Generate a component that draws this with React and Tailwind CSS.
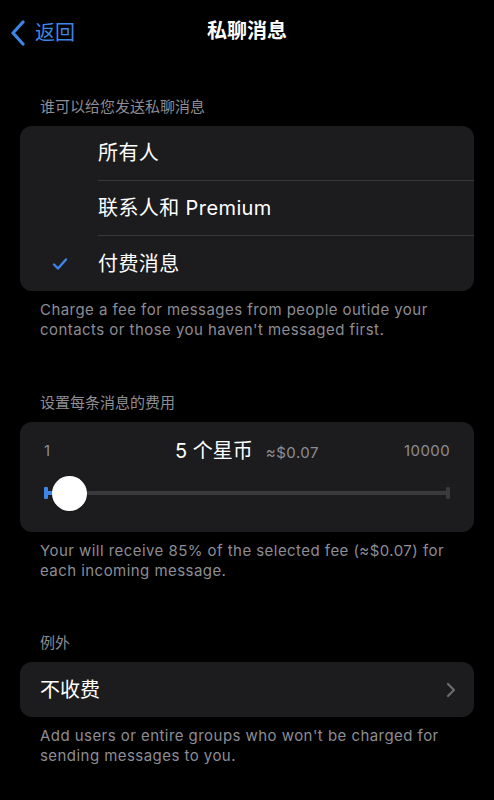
import React from 'react'

const font = { fontFamily: '"Inter", "Noto Sans CJK SC", sans-serif' }

const Check = () => (
  <svg width="16" height="14" viewBox="0 0 16 14" fill="none">
    <path d="M2 7.5 L6 11.5 L14 2.5" stroke="#3c86e8" strokeWidth="2.4" strokeLinecap="round" strokeLinejoin="round" />
  </svg>
)

const Option = ({ label, checked, last }) => (
  <div className="flex items-center h-[55px]">
    <div className="w-[78px] pl-[32px] flex items-center">{checked && <Check />}</div>
    <div className={`flex-1 h-full flex items-center text-[20px] tracking-[0.4px] text-white ${last ? '' : 'border-b border-[#38383a]'}`}>
      {label}
    </div>
  </div>
)

const Note = ({ children }) => (
  <p className="px-[40px] pt-[9px] text-[15px] leading-[20px] tracking-[0.45px] text-[#8d8d93]">{children}</p>
)

const Header = ({ children, className }) => (
  <p className={`px-[40px] pb-[9px] text-[15px] leading-[20px] text-[#8d8d93] ${className}`}>{children}</p>
)

export default function App() {
  return (
    <div className="w-[494px] h-[800px] bg-black overflow-hidden" style={font}>
      {/* nav */}
      <div className="relative h-[62px] flex items-center justify-center">
        <div className="absolute left-[10px] top-[18px] flex items-center gap-[9px] text-[#3c86e8]">
          <svg width="16" height="26" viewBox="0 0 16 26" fill="none">
            <path d="M13 2 L3 13 L13 24" stroke="#3c86e8" strokeWidth="3.2" strokeLinecap="round" strokeLinejoin="round" />
          </svg>
          <span className="text-[20px]">返回</span>
        </div>
        <span className="text-white text-[20px] font-semibold">私聊消息</span>
      </div>

      <Header className="pt-[35px]">谁可以给您发送私聊消息</Header>
      <div className="mx-[20px] rounded-[12px] bg-[#1c1c1e] overflow-hidden">
        <Option label="所有人" />
        <Option label="联系人和 Premium" />
        <Option label="付费消息" checked last />
      </div>
      <Note>Charge a fee for messages from people outide your contacts or those you haven't messaged first.</Note>

      <Header className="pt-[53px]">设置每条消息的费用</Header>
      <div className="mx-[20px] rounded-[12px] bg-[#1c1c1e] h-[110px] px-[24px] pt-[17px]">
        <div className="flex items-center justify-between h-[24px]">
          <span className="text-[15px] text-[#8d8d93] w-[50px]">1</span>
          <div className="flex items-baseline gap-[13px]">
            <span className="text-white text-[20px]">5 个星币</span>
            <span className="text-[#8d8d93] text-[15px] tracking-[0.5px]">≈$0.07</span>
          </div>
          <span className="text-[15px] text-[#8d8d93] w-[50px] text-right tracking-[0.4px]">10000</span>
        </div>
        <div className="relative mt-[10px] h-[40px] flex items-center">
          <div className="h-[4px] flex-1 bg-[#3a3a3c] rounded-full" />
          <div className="absolute left-0 top-[14px] w-[4px] h-[12px] bg-[#3c86e8] rounded-[1px]" />
          <div className="absolute left-0 top-[18px] w-[12px] h-[4px] bg-[#3c86e8]" />
          <div className="absolute right-[0px] top-[14px] w-[4px] h-[12px] bg-[#3a3a3c] rounded-[1px]" />
          <div className="absolute left-[8px] top-[3px] w-[35px] h-[35px] rounded-full bg-white shadow" />
        </div>
      </div>
      <Note>Your will receive 85% of the selected fee (≈$0.07) for each incoming message.</Note>

      <Header className="pt-[52px]">例外</Header>
      <div className="mx-[20px] rounded-[12px] bg-[#1c1c1e] h-[55px] flex items-center justify-between pl-[20px] pr-[18px]">
        <span className="text-white text-[20px]">不收费</span>
        <svg width="10" height="16" viewBox="0 0 10 16" fill="none">
          <path d="M2 2 L8 8 L2 14" stroke="#6b6b70" strokeWidth="2.2" strokeLinecap="round" strokeLinejoin="round" />
        </svg>
      </div>
      <Note>Add users or entire groups who won't be charged for sending messages to you.</Note>
    </div>
  )
}
